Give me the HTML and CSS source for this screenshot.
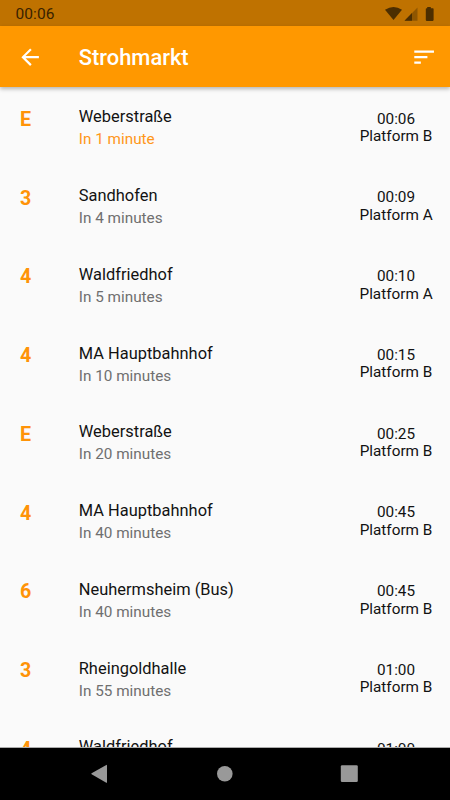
FILE: index.html
```html
<!DOCTYPE html>
<html lang="en">
<head>
<meta charset="utf-8">
<title>Strohmarkt</title>
<link rel="stylesheet" href="styles.css">
</head>
<body>
<div class="screen">
  <div class="status">
    <span class="clock">00:06</span>
    <svg class="status-icons" width="54" height="18" viewBox="0 0 54 18">
      <path d="M2 4.7Q10.5-.7 19 4.7L10.5 15Z"/>
      <path class="faint" d="M34.5 2.5V15.8H21.5Z"/>
      <path d="M29 8.1V15.8H21.5Z"/>
      <path d="M44.2 2h3.6v1.3h2q.8 0 .8.8v11q0 .8-.8.8h-6.2q-.8 0-.8-.8v-11q0-.8.8-.8h.6Z"/>
    </svg>
  </div>
  <header class="appbar">
    <svg class="back" width="26.25" height="26.25" viewBox="0 0 24 24"><path d="M20 11H7.83l5.59-5.59L12 4l-8 8 8 8 1.41-1.41L7.83 13H20v-2z"/></svg>
    <h1>Strohmarkt</h1>
    <svg class="sort" width="26.25" height="26.25" viewBox="0 0 24 24"><path d="M3 18h6v-2H3v2zM3 6v2h18V6H3zm0 7h12v-2H3v2z"/></svg>
  </header>
  <main class="list">
    <div class="row"><b class="line">E</b><div class="info"><div class="dest">Weberstraße</div><div class="due now">In 1 minute</div></div><div class="dep">00:06<br>Platform B</div></div>
    <div class="row"><b class="line">3</b><div class="info"><div class="dest">Sandhofen</div><div class="due">In 4 minutes</div></div><div class="dep">00:09<br>Platform A</div></div>
    <div class="row"><b class="line">4</b><div class="info"><div class="dest">Waldfriedhof</div><div class="due">In 5 minutes</div></div><div class="dep">00:10<br>Platform A</div></div>
    <div class="row"><b class="line">4</b><div class="info"><div class="dest">MA Hauptbahnhof</div><div class="due">In 10 minutes</div></div><div class="dep">00:15<br>Platform B</div></div>
    <div class="row"><b class="line">E</b><div class="info"><div class="dest">Weberstraße</div><div class="due">In 20 minutes</div></div><div class="dep">00:25<br>Platform B</div></div>
    <div class="row"><b class="line">4</b><div class="info"><div class="dest">MA Hauptbahnhof</div><div class="due">In 40 minutes</div></div><div class="dep">00:45<br>Platform B</div></div>
    <div class="row"><b class="line">6</b><div class="info"><div class="dest">Neuhermsheim (Bus)</div><div class="due">In 40 minutes</div></div><div class="dep">00:45<br>Platform B</div></div>
    <div class="row"><b class="line">3</b><div class="info"><div class="dest">Rheingoldhalle</div><div class="due">In 55 minutes</div></div><div class="dep">01:00<br>Platform B</div></div>
    <div class="row"><b class="line">4</b><div class="info"><div class="dest">Waldfriedhof</div></div><div class="dep">01:00</div></div>
  </main>
  <nav class="navbar">
    <svg width="18" height="20" viewBox="0 0 18 20"><path d="M17 1.2v17.2q0 .6-.7.3L1.6 10.3q-.7-.5 0-1L16.3.9q.7-.3.7.3Z"/></svg>
    <svg width="18" height="20" viewBox="0 0 18 20"><circle cx="9.8" cy="9.7" r="7.8"/></svg>
    <svg width="18" height="20" viewBox="0 0 18 20"><rect x=".8" y="1.3" width="17" height="16.8" rx="1.3"/></svg>
  </nav>
</div>
</body>
</html>
```
FILE: styles.css
```css
* { box-sizing: border-box; }
body { margin: 0; font-family: Roboto, sans-serif; background: #fafafa; }
.screen { width: 450px; height: 800px; display: flex; flex-direction: column; overflow: hidden; }
.status {
  flex: none; height: 26.25px; padding: 1px 13px 0 15.5px; background: #bf7200;
  display: flex; align-items: center; justify-content: space-between;
}
.clock { font-size: 15.5px; line-height: 18px; letter-spacing: .1px; color: #392200; }
.status-icons { fill: #4c2e00; }
.status-icons .faint { fill: #8f5600; }
.appbar {
  flex: none; height: 61px; padding: 0 13px 0 17px; background: #ff9800; z-index: 1;
  display: flex; align-items: center; box-shadow: 0 2px 4px rgba(0, 0, 0, .28);
}
.appbar svg { fill: #fff; flex: none; }
.appbar h1 {
  margin: 0 auto 0 35.5px; padding-top: 2px; color: #fff; font-size: 21.9px; line-height: 26px;
  font-weight: 500; letter-spacing: 0;
}
.list { flex: 1; min-height: 0; overflow: hidden; border-bottom: 1px solid #ababab; }
.row { height: 78.75px; padding: 0 17.5px 0 20px; display: flex; color: #121212; }
.line { width: 58.75px; padding-top: 20.6px; font-size: 19.7px; line-height: 23px; font-weight: 700; color: #ff9307; }
.info { flex: 1; }
.dest { padding-top: 19px; font-size: 16.4px; line-height: 22px; letter-spacing: .02px; }
.due { font-size: 15.3px; line-height: 22px; letter-spacing: 0; color: #6f6f6f; }
.due.now { color: #ff9619; }
.dep { width: 73px; padding-top: 23.3px; font-size: 15.3px; line-height: 17.5px; text-align: center; white-space: nowrap; }
.navbar {
  flex: none; height: 52px; padding: 0 92px 0 90px; background: #000; fill: #999;
  display: flex; align-items: center; justify-content: space-between;
}
```
